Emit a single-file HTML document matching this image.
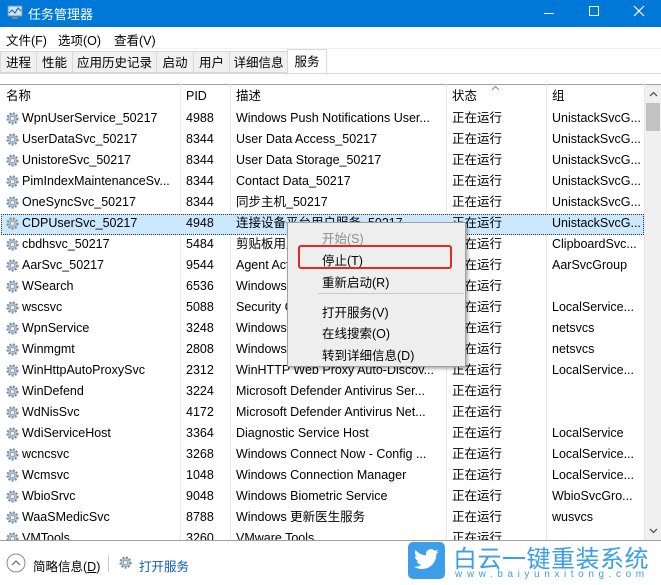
<!DOCTYPE html>
<html><head><meta charset="utf-8"><style>
*{margin:0;padding:0;box-sizing:border-box}
body{width:661px;height:585px;overflow:hidden;background:#fff;font-family:"Liberation Sans","Noto Sans CJK SC",sans-serif;font-size:12.5px;color:#000;position:relative}
.a{position:absolute;white-space:nowrap}
.title{left:0;top:0;width:661px;height:27px;background:#0078d7;color:#fff}
.menu{top:27px;left:0;width:661px;height:21px;background:#fff}
.tabs{top:48px;left:0;width:661px;height:26px;background:#fff;border-top:1px solid #f0f0f0}
.tab{position:absolute;top:2px;height:22px;background:#f0f0f0;border:1px solid #d9d9d9;line-height:22px;text-align:center}
.row{position:absolute;left:0;width:645px;height:21px;line-height:21px}
.row span{position:absolute;top:0}
.gear{position:absolute;left:5px;top:3px;width:15px;height:15px}
.sep{position:absolute;top:84px;width:1px;height:456px;background:#e8e8e8}
.mi{position:absolute;left:34px}
</style></head><body>
<div class="a title">
 <svg class="a" style="left:7px;top:5px" width="16" height="15" viewBox="0 0 16 15"><rect x="1" y="1" width="14" height="10" fill="#cfe6f7" stroke="#6a8fb0"/><polyline points="2,8 5,5 8,8 11,3 14,6" fill="none" stroke="#2a6ca8" stroke-width="1.2"/><rect x="5" y="12" width="6" height="2" fill="#888"/></svg>
 <span class="a" style="left:28px;top:4px;font-size:13px">任务管理器</span>
 <div class="a" style="left:544px;top:13px;width:10px;height:1px;background:#fff"></div>
 <div class="a" style="left:589px;top:6px;width:10px;height:10px;border:1px solid #fff"></div>
 <svg class="a" style="left:633px;top:5px" width="12" height="12"><path d="M1 1L11 11M11 1L1 11" stroke="#fff" stroke-width="1.2"/></svg>
</div>
<div class="a menu"><span class="a" style="left:6px;top:3px">文件(F)</span><span class="a" style="left:58px;top:3px">选项(O)</span><span class="a" style="left:114px;top:3px">查看(V)</span></div>
<div class="a tabs">
 <div class="tab" style="left:0;width:37px">进程</div>
 <div class="tab" style="left:36px;width:37px">性能</div>
 <div class="tab" style="left:72px;width:85px">应用历史记录</div>
 <div class="tab" style="left:156px;width:38px">启动</div>
 <div class="tab" style="left:193px;width:37px">用户</div>
 <div class="tab" style="left:229px;width:59px">详细信息</div>
 <div class="tab" style="left:287px;width:40px;top:0;height:26px;background:#fff;border-bottom:none;line-height:24px">服务</div>
</div>
<div class="a" style="left:0;top:73px;width:661px;height:1px;background:#d9d9d9"></div>
<div class="a" style="left:0;top:84px;width:661px;height:1px;background:#a0a0a0"></div>
<div class="a" style="left:0;top:85px;width:645px;height:22px;line-height:22px">
 <span class="a" style="left:6px">名称</span><span class="a" style="left:186px">PID</span><span class="a" style="left:236px">描述</span><span class="a" style="left:452px">状态</span><span class="a" style="left:552px">组</span>
 <svg class="a" style="left:491px;top:0" width="9" height="6"><path d="M1 5L4.5 1.5L8 5" fill="none" stroke="#888"/></svg>
</div>
<div class="sep" style="left:180px"></div><div class="sep" style="left:230px"></div><div class="sep" style="left:446px"></div><div class="sep" style="left:546px"></div><div class="sep" style="left:644px"></div>
<div class="a" style="left:645px;top:85px;width:16px;height:455px;background:#f0f0f0"></div>
<div class="a" style="left:646px;top:103px;width:14px;height:28px;background:#c2c2c2"></div>
<svg class="a" style="left:649px;top:91px" width="9" height="6"><path d="M1 5L4.5 1.5L8 5" fill="none" stroke="#555" stroke-width="1.3"/></svg>
<svg class="a" style="left:649px;top:528px" width="9" height="6"><path d="M1 1L4.5 4.5L8 1" fill="none" stroke="#555" stroke-width="1.3"/></svg>
<div class="a" style="left:1px;top:214px;width:643px;height:21px;background:#cce8ff;border:1px dotted #333"></div>
<div id="rows"></div>
<div class="a" style="left:0;top:540px;width:661px;height:1px;background:#a0a0a0"></div>
<div class="a" style="left:0;top:541px;width:661px;height:44px;background:#fff"></div>
<svg class="a" style="left:6px;top:553px" width="20" height="20"><circle cx="10" cy="10" r="9" fill="none" stroke="#888"/><path d="M6 12L10 8L14 12" fill="none" stroke="#666" stroke-width="1.2"/></svg>
<span class="a" style="left:33px;top:556px">简略信息(<u>D</u>)</span>
<div class="a" style="left:108px;top:555px;width:1px;height:17px;background:#ccc"></div>
<svg class="a gear" style="left:118px;top:555px" viewBox="0 0 16 16"><use href="#g"/></svg>
<span class="a" style="left:139px;top:556px;color:#0a5fb4">打开服务</span>
<div class="a" style="left:408px;top:542px;width:37px;height:37px;background:#3c9ee8;border-radius:5px"></div>
<svg class="a" style="left:413px;top:548px" width="27" height="24" viewBox="0 0 24 20"><path d="M23 2.5c-.8.4-1.7.6-2.6.7.9-.6 1.6-1.4 2-2.5-.9.5-1.9.9-2.9 1.1C18.6.9 17.4.3 16 .3c-2.5 0-4.5 2-4.5 4.5 0 .4 0 .7.1 1C7.8 5.6 4.5 3.8 2.3 1.100c-.4.7-.6 1.4-.6 2.3 0 1.6.8 2.9 2 3.7-.7 0-1.4-.2-2-.6 0 2.2 1.6 4 3.6 4.4-.4.1-.8.2-1.2.2-.3 0-.6 0-.8-.1.6 1.8 2.2 3.1 4.2 3.1-1.5 1.2-3.5 1.9-5.6 1.9H1c2 1.3 4.4 2 6.9 2 8.3 0 12.8-6.9 12.8-12.8v-.6c.9-.6 1.6-1.4 2.3-2.1z" fill="#fff"/></svg>
<span class="a" style="left:453px;top:539px;font-size:24px;color:#3c9ee8;letter-spacing:0.5px">白云一键重装系统</span>
<span class="a" style="left:455px;top:569px;font-size:10px;color:#3c9ee8;letter-spacing:4.6px">www.baiyunxitong.com</span>
<div class="a" style="left:287px;top:222px;width:179px;height:145px;background:#eeeeee;border:1px solid #a0a0a0;box-shadow:2px 2px 3px rgba(0,0,0,.3)">
 <span class="mi" style="top:5px;color:#8d8d8d">开始(S)</span>
 <span class="mi" style="top:27px">停止(T)</span>
 <span class="mi" style="top:49px">重新启动(R)</span>
 <div class="a" style="left:30px;top:70px;width:146px;height:1px;background:#c8c8c8"></div>
 <span class="mi" style="top:79px">打开服务(V)</span>
 <span class="mi" style="top:100px">在线搜索(O)</span>
 <span class="mi" style="top:122px">转到详细信息(D)</span>
</div>
<div class="a" style="left:298px;top:245px;width:154px;height:24px;border:2px solid #e8281e;border-radius:3px"></div>
<svg width="0" height="0" style="position:absolute"><defs><g id="g"><circle cx="8" cy="8" r="5.3" fill="#b8c8d6" stroke="#7d8e9c" stroke-width="2.4" stroke-dasharray="2 1.6"/><circle cx="8" cy="8" r="2.3" fill="#eef3f7" stroke="#7d8e9c" stroke-width=".8"/></g></defs></svg>
<script>
var d=[["WpnUserService_50217","4988","Windows Push Notifications User...","UnistackSvcG..."],
["UserDataSvc_50217","8344","User Data Access_50217","UnistackSvcG..."],
["UnistoreSvc_50217","8344","User Data Storage_50217","UnistackSvcG..."],
["PimIndexMaintenanceSv...","8344","Contact Data_50217","UnistackSvcG..."],
["OneSyncSvc_50217","8344","同步主机_50217","UnistackSvcG..."],
["CDPUserSvc_50217","4948","连接设备平台用户服务_50217","UnistackSvcG..."],
["cbdhsvc_50217","5484","剪贴板用户服务_50217","ClipboardSvc..."],
["AarSvc_50217","9544","Agent Activation Runtime_50217","AarSvcGroup"],
["WSearch","6536","Windows Search",""],
["wscsvc","5088","Security Center","LocalService..."],
["WpnService","3248","Windows Push Notifications Sys...","netsvcs"],
["Winmgmt","2808","Windows Management Instrume...","netsvcs"],
["WinHttpAutoProxySvc","2312","WinHTTP Web Proxy Auto-Discov...","LocalService..."],
["WinDefend","3224","Microsoft Defender Antivirus Ser...",""],
["WdNisSvc","4172","Microsoft Defender Antivirus Net...",""],
["WdiServiceHost","3364","Diagnostic Service Host","LocalService"],
["wcncsvc","3268","Windows Connect Now - Config ...","LocalService..."],
["Wcmsvc","1048","Windows Connection Manager","LocalService..."],
["WbioSrvc","9048","Windows Biometric Service","WbioSvcGro..."],
["WaaSMedicSvc","8788","Windows 更新医生服务","wusvcs"],
["VMTools","3260","VMware Tools",""]];
var h="";d.forEach(function(r,i){var t=108+i*21;h+='<div class="row" style="top:'+t+'px"><svg class="gear" viewBox="0 0 16 16"><use href="#g"/></svg><span style="left:22px">'+r[0]+'</span><span style="left:186px">'+r[1]+'</span><span style="left:236px">'+r[2]+'</span><span style="left:452px">正在运行</span><span style="left:552px">'+r[3]+'</span></div>';});
document.getElementById("rows").innerHTML=h;
</script>
</body></html>
